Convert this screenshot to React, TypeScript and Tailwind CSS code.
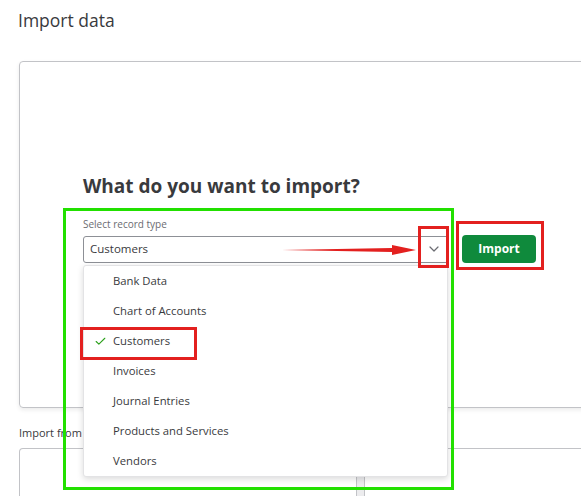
import { Check, ChevronDown } from "lucide-react";

const recordTypes = [
  "Bank Data",
  "Chart of Accounts",
  "Customers",
  "Invoices",
  "Journal Entries",
  "Products and Services",
  "Vendors",
];

function RedArrow() {
  return (
    <svg
      className="absolute left-[282px] top-[243px] z-20"
      width="136"
      height="14"
      viewBox="0 0 136 14"
    >
      <polygon points="0,7 110,5 110,2 134,7 110,12 110,9" fill="#e3201f" />
    </svg>
  );
}

export default function App() {
  return (
    <div className="relative h-[496px] w-[581px] overflow-hidden bg-white font-['Open_Sans',sans-serif] text-[#393a3d]">
      <h1 className="pl-[18px] pt-[9px] text-[17.5px] leading-[22px]">
        Import data
      </h1>

      <div className="ml-[19px] mt-[30px] h-[347px] w-[600px] rounded-[4px] border border-[#c2c3c7] pl-[63px] pt-[111px] shadow-[0_2px_4px_rgba(0,0,0,0.08)]">
        <h2 className="text-[19px] font-bold leading-[26px]">
          What do you want to import?
        </h2>
        <div className="mt-[18px] text-[10px] leading-[14px] text-[#6b6c72]">
          Select record type
        </div>
        <div className="relative mt-[4px] flex items-center">
          <div className="flex h-[27px] w-[366px] items-center justify-between rounded-[3px] border border-[#8d9096] pl-[6px] pr-[6px] text-[11.5px]">
            <span>Customers</span>
            <ChevronDown size={16} strokeWidth={1.8} className="text-[#6b6c72]" />
          </div>
          <button className="ml-[13px] h-[28px] w-[74px] rounded-[4px] bg-[#0f8a3c] text-[12px] font-bold text-white">
            Import
          </button>

          <ul className="absolute left-0 top-[30px] z-10 w-[365px] rounded-[3px] border border-[#e3e3e5] bg-white shadow-[0_2px_6px_rgba(0,0,0,0.15)]">
            {recordTypes.map((t) => (
              <li
                key={t}
                className="flex h-[30px] items-center text-[11.3px] text-[#393a3d]"
              >
                <span className="flex w-[29px] justify-end pr-[6px]">
                  {t === "Customers" && (
                    <Check size={13} strokeWidth={2} className="text-[#2ca01c]" />
                  )}
                </span>
                {t}
              </li>
            ))}
          </ul>
        </div>
      </div>

      <div className="ml-[19px] mt-[17px] text-[11px] leading-[16px]">
        Import from
      </div>
      <div className="mt-[7px] flex h-[60px]">
        <div className="ml-[19px] w-[338px] rounded-t-[4px] border border-b-0 border-[#c2c3c7]" />
        <div className="w-[7px] bg-[#ececee]" />
        <div className="flex-1 border-l border-t border-[#c2c3c7]" />
      </div>

      {/* annotations */}
      <div className="pointer-events-none absolute left-[63px] top-[208px] z-20 h-[282px] w-[391px] border-[3px] border-[#22e000]" />
      <div className="pointer-events-none absolute left-[418px] top-[226px] z-20 h-[42px] w-[31px] border-[3px] border-[#e3201f]" />
      <div className="pointer-events-none absolute left-[456px] top-[221px] z-20 h-[49px] w-[88px] border-[3px] border-[#e3201f]" />
      <div className="pointer-events-none absolute left-[80px] top-[327px] z-20 h-[33px] w-[117px] border-[3px] border-[#e3201f]" />
      <RedArrow />
    </div>
  );
}
